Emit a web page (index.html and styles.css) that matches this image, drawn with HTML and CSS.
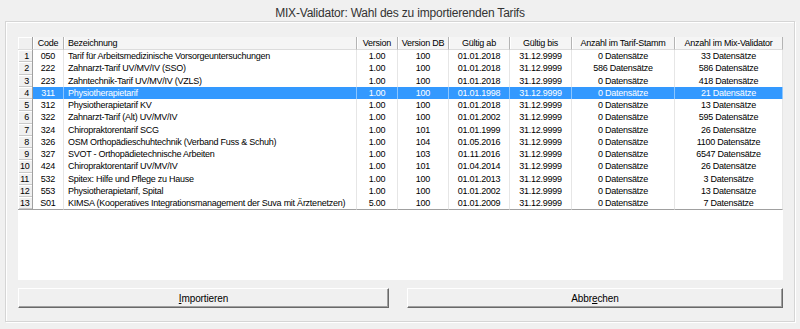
FILE: index.html
```html
<!DOCTYPE html>
<html lang="de">
<head>
    <meta charset="UTF-8">
    <title>MIX-Validator</title>
    <link rel="stylesheet" href="styles.css">
</head>
<body>
    <div class="title">MIX-Validator: Wahl des zu importierenden Tarifs</div>
    <div class="frame">
        <div class="grid">
            <table class="tarife">
                <colgroup>
                    <col style="width:15px">
                    <col style="width:31px">
                    <col style="width:293px">
                    <col style="width:41px">
                    <col style="width:51px">
                    <col style="width:61px">
                    <col style="width:62px">
                    <col style="width:103px">
                    <col style="width:108px">
                </colgroup>
                <thead>
                    <tr>
                        <th class="nr"></th>
                        <th>Code</th>
                        <th class="left">Bezeichnung</th>
                        <th>Version</th>
                        <th>Version DB</th>
                        <th>Gültig ab</th>
                        <th>Gültig bis</th>
                        <th>Anzahl im Tarif-Stamm</th>
                        <th>Anzahl im Mix-Validator</th>
                    </tr>
                </thead>
                <tbody>
                    <tr><td class="nr">1</td><td>050</td><td class="left">Tarif für Arbeitsmedizinische Vorsorgeuntersuchungen</td><td>1.00</td><td>100</td><td>01.01.2018</td><td>31.12.9999</td><td>0 Datensätze</td><td>33 Datensätze</td></tr>
                    <tr><td class="nr">2</td><td>222</td><td class="left">Zahnarzt-Tarif UV/MV/IV (SSO)</td><td>1.00</td><td>100</td><td>01.01.2018</td><td>31.12.9999</td><td>586 Datensätze</td><td>586 Datensätze</td></tr>
                    <tr><td class="nr">3</td><td>223</td><td class="left">Zahntechnik-Tarif UV/MV/IV (VZLS)</td><td>1.00</td><td>100</td><td>01.01.2018</td><td>31.12.9999</td><td>0 Datensätze</td><td>418 Datensätze</td></tr>
                    <tr class="selected"><td class="nr">4</td><td>311</td><td class="left">Physiotherapietarif</td><td>1.00</td><td>100</td><td>01.01.1998</td><td>31.12.9999</td><td>0 Datensätze</td><td>21 Datensätze</td></tr>
                    <tr><td class="nr">5</td><td>312</td><td class="left">Physiotherapietarif KV</td><td>1.00</td><td>100</td><td>01.01.2018</td><td>31.12.9999</td><td>0 Datensätze</td><td>13 Datensätze</td></tr>
                    <tr><td class="nr">6</td><td>322</td><td class="left">Zahnarzt-Tarif (Alt) UV/MV/IV</td><td>1.00</td><td>100</td><td>01.01.2002</td><td>31.12.9999</td><td>0 Datensätze</td><td>595 Datensätze</td></tr>
                    <tr><td class="nr">7</td><td>324</td><td class="left">Chiropraktorentarif SCG</td><td>1.00</td><td>101</td><td>01.01.1999</td><td>31.12.9999</td><td>0 Datensätze</td><td>26 Datensätze</td></tr>
                    <tr><td class="nr">8</td><td>326</td><td class="left">OSM Orthopädieschuhtechnik (Verband Fuss &amp; Schuh)</td><td>1.00</td><td>104</td><td>01.05.2016</td><td>31.12.9999</td><td>0 Datensätze</td><td>1100 Datensätze</td></tr>
                    <tr><td class="nr">9</td><td>327</td><td class="left">SVOT - Orthopädietechnische Arbeiten</td><td>1.00</td><td>103</td><td>01.11.2016</td><td>31.12.9999</td><td>0 Datensätze</td><td>6547 Datensätze</td></tr>
                    <tr><td class="nr">10</td><td>424</td><td class="left">Chiropraktorentarif UV/MV/IV</td><td>1.00</td><td>101</td><td>01.04.2014</td><td>31.12.9999</td><td>0 Datensätze</td><td>26 Datensätze</td></tr>
                    <tr><td class="nr">11</td><td>532</td><td class="left">Spitex: Hilfe und Pflege zu Hause</td><td>1.00</td><td>100</td><td>01.01.2013</td><td>31.12.9999</td><td>0 Datensätze</td><td>3 Datensätze</td></tr>
                    <tr><td class="nr">12</td><td>553</td><td class="left">Physiotherapietarif, Spital</td><td>1.00</td><td>100</td><td>01.01.2002</td><td>31.12.9999</td><td>0 Datensätze</td><td>13 Datensätze</td></tr>
                    <tr class="last"><td class="nr">13</td><td>S01</td><td class="left">KIMSA (Kooperatives Integrationsmanagement der Suva mit Ärztenetzen)</td><td>5.00</td><td>100</td><td>01.01.2009</td><td>31.12.9999</td><td>0 Datensätze</td><td>7 Datensätze</td></tr>
                </tbody>
            </table>
        </div>
        <div class="buttons">
            <button class="btn"><u>I</u>mportieren</button>
            <button class="btn">Abbr<u>e</u>chen</button>
        </div>
    </div>
</body>
</html>
```

FILE: styles.css
```css
body {
    margin: 0;
    width: 800px;
    height: 329px;
    overflow: hidden;
    background: #f0f0f0;
    font-family: 'Liberation Sans', Arial, sans-serif;
    color: #000;
}

.title {
    height: 21px;
    line-height: 26px;
    text-align: center;
    font-size: 12px;
    letter-spacing: -0.2px;
    color: #333;
}

.frame {
    margin: 0 5px;
    padding: 15px 11px 13px 12px;
    box-sizing: border-box;
    height: 301px;
    border: 1px solid #d5d5d5;
    box-shadow: inset 1px 1px 0 #fff, 1px 1px 0 #fff;
    display: flex;
    flex-direction: column;
}

.grid {
    height: 243px;
    background: #fff;
    overflow: hidden;
}

.tarife {
    border-collapse: separate;
    border-spacing: 0;
    table-layout: fixed;
    width: 765px;
    font-size: 9px;
    letter-spacing: -0.25px;
}

.tarife th,
.tarife td {
    padding: 0 2px;
    white-space: nowrap;
    overflow: hidden;
    text-align: center;
    box-sizing: border-box;
}

.tarife th {
    height: 12px;
    line-height: 12px;
    font-weight: normal;
    background: #f5f5f5;
    border-right: 1px solid #b4b4b4;
    border-bottom: 1px solid #dcdcdc;
    box-shadow: inset 1px 0 0 #fff;
}

.tarife td {
    height: 12.25px;
    line-height: 12px;
    border-right: 1px solid #e6e6e6;
}

.tarife .left {
    text-align: left;
    padding-left: 4px;
}

.tarife .nr {
    text-align: right;
    padding-right: 3px;
    background: #f0f0f0;
    border-right: 1px solid #a0a0a0;
    box-shadow: inset 1px 1px 0 #fff, inset 0 -1px 0 #c8c8c8;
}

.tarife th.nr {
    box-shadow: inset 1px 1px 0 #fff;
}

.selected td {
    background: #3399ff;
    color: #fff;
    border-right-color: #8cc6ff;
}

.selected td.nr {
    background: #f0f0f0;
    color: #000;
    border-right-color: #a0a0a0;
}

.last td {
    border-bottom: 1px solid #a0a0a0;
}

.buttons {
    margin-top: 8px;
    display: grid;
    grid-template-columns: 371px 1fr;
    column-gap: 18px;
}

.btn {
    height: 20px;
    padding: 0;
    background: #f0f0f0;
    border: none;
    border-top: 1px solid #fff;
    border-left: 1px solid #fff;
    border-right: 1px solid #696969;
    border-bottom: 1px solid #696969;
    box-shadow: inset -1px -1px 0 #a0a0a0;
    font-family: 'Liberation Sans', Arial, sans-serif;
    font-size: 10px;
    letter-spacing: -0.1px;
    color: #000;
}
```
